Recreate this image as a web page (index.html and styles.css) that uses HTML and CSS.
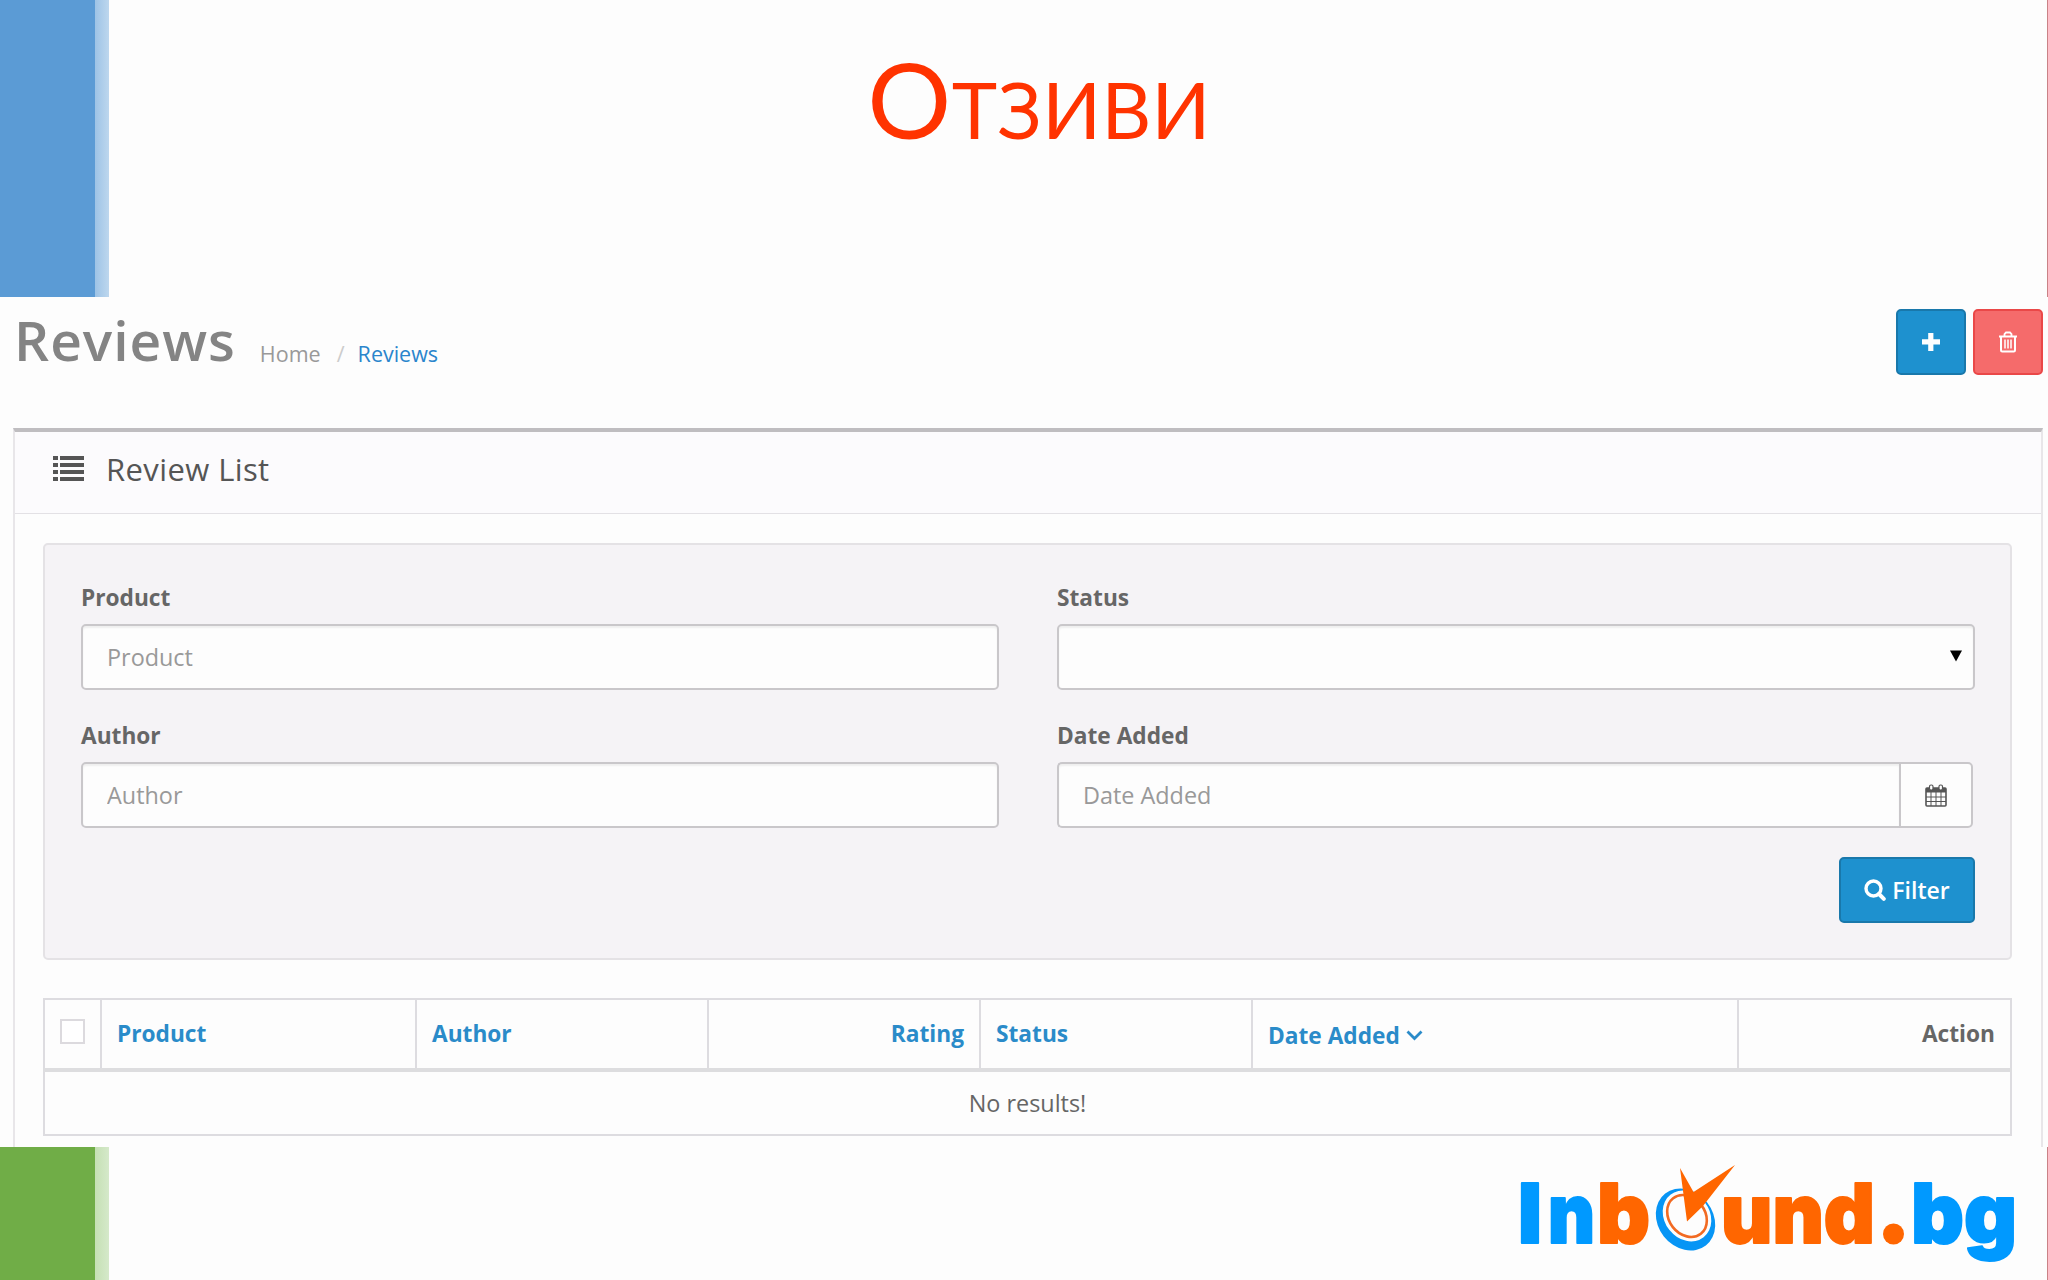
FILE: index.html
```
<!DOCTYPE html>
<html lang="bg">
<head>
    <meta charset="UTF-8">
    <title>Отзиви</title>
    <link rel="stylesheet" href="styles.css">
</head>
<body>

    <header class="slide-top">
        <div class="stripe stripe-blue"></div>
        <h1 class="slide-title"><span class="cap">О</span>тзиви</h1>
    </header>

    <main class="content">
        <div class="page-header">
            <h2>Reviews</h2>
            <ul class="breadcrumb">
                <li>Home</li>
                <li class="sep">/</li>
                <li class="active">Reviews</li>
            </ul>
            <div class="actions">
                <button type="button" class="btn btn-icon">
                    <svg width="20" height="20" viewBox="0 0 20 20"><path d="M7.2 1h5.200v6.300H19v5.200h-6.600V19H7.200v-6.500H1V7.300h6.200z" fill="#fff"/></svg>
                </button>
                <button type="button" class="btn btn-icon btn-danger">
                    <svg width="20" height="22" viewBox="0 0 20 22" fill="none" stroke="#fff">
                        <path d="M1 5.500h18M6.500 5V3l1.500-1.500h4L13.500 3v2" stroke-width="1.800"/>
                        <path d="M3 5.500V19.300q0 1.200 1.200 1.200h11.600q1.200 0 1.200-1.200V5.500" stroke-width="2"/>
                        <path d="M7 8.500v9M10 8.500v9M13 8.500v9" stroke-width="1.500"/>
                    </svg>
                </button>
            </div>
        </div>

        <section class="panel">
            <div class="panel-heading">
                <svg width="31" height="25" viewBox="0 0 31 25" fill="#555">
                    <path d="M0 0h5v4H0zM7 0h24v4H7zM0 7h5v4H0zM7 7h24v4H7zM0 14h5v4H0zM7 14h24v4H7zM0 21h5v4H0zM7 21h24v4H7z"/>
                </svg>
                <h3>Review List</h3>
            </div>

            <div class="panel-body">
                <form class="well">
                    <div class="field">
                        <label for="product">Product</label>
                        <input type="text" id="product" placeholder="Product">
                    </div>
                    <div class="field">
                        <label for="status">Status</label>
                        <div class="select">
                            <select id="status"><option></option></select>
                            <svg class="arrow" width="12" height="12" viewBox="0 0 12 12"><path d="M0 0.500h12L6 11.500z"/></svg>
                        </div>
                    </div>
                    <div class="field">
                        <label for="author">Author</label>
                        <input type="text" id="author" placeholder="Author">
                    </div>
                    <div class="field">
                        <label for="date">Date Added</label>
                        <div class="input-group">
                            <input type="text" id="date" placeholder="Date Added">
                            <button type="button" class="addon">
                                <svg width="22" height="23" viewBox="0 0 22 23" fill="none" stroke="#555">
                                    <path d="M1 4h20v4.500H1z" fill="#555" stroke="none"/>
                                    <rect x="1" y="4" width="20" height="18" rx="1" stroke-width="1.600"/>
                                    <path d="M1 13h20M1 17.500h20M6 8v14M11 8v14M16 8v14" stroke-width="1"/>
                                    <rect x="4.500" y="1" width="3.500" height="5" rx="1.500" fill="#fff" stroke-width="1.200"/>
                                    <rect x="14" y="1" width="3.500" height="5" rx="1.500" fill="#fff" stroke-width="1.200"/>
                                </svg>
                            </button>
                        </div>
                    </div>
                    <button type="button" class="btn btn-filter">
                        <svg width="22" height="22" viewBox="0 0 22 22" fill="none" stroke="#fff">
                            <circle cx="9.500" cy="9.500" r="7.500" stroke-width="3.400"/>
                            <path d="M15 15l4.800 4.800" stroke-width="4" stroke-linecap="round"/>
                        </svg>
                        Filter
                    </button>
                </form>

                <table>
                    <colgroup>
                        <col class="c-check"><col class="c-product"><col class="c-author"><col class="c-rating"><col class="c-status"><col class="c-date"><col>
                    </colgroup>
                    <thead>
                        <tr>
                            <th class="check"><input type="checkbox"></th>
                            <th>Product</th>
                            <th>Author</th>
                            <th class="right">Rating</th>
                            <th>Status</th>
                            <th class="sorted">Date Added
                                <svg width="17" height="11" viewBox="0 0 17 11"><path d="M1.500 1.500l7 7 7-7" fill="none" stroke="#2a8bc9" stroke-width="2.800"/></svg>
                            </th>
                            <th class="right plain">Action</th>
                        </tr>
                    </thead>
                    <tbody>
                        <tr>
                            <td colspan="7">No results!</td>
                        </tr>
                    </tbody>
                </table>
            </div>
        </section>
    </main>

    <footer class="slide-bottom">
        <div class="stripe stripe-green"></div>
        <svg class="logo" width="508" height="110" viewBox="1512 1160 508 110">
            <g class="logo-blue">
                <text x="1518" y="1243" textLength="24" lengthAdjust="spacingAndGlyphs">I</text>
                <text x="1548" y="1243" textLength="47" lengthAdjust="spacingAndGlyphs">n</text>
                <text x="1911" y="1243" textLength="106" lengthAdjust="spacingAndGlyphs">bg</text>
            </g>
            <g class="logo-orange">
                <text x="1597" y="1243" textLength="53" lengthAdjust="spacingAndGlyphs">b</text>
                <text x="1721" y="1243" textLength="154" lengthAdjust="spacingAndGlyphs">und</text>
            </g>
            <circle cx="1893.500" cy="1234" r="10.500" fill="#ff6600"/>
            <!-- target with the arrow in place of the "o" -->
            <g transform="rotate(-38 1685.500 1219.500)">
                <ellipse cx="1685.500" cy="1219.500" rx="27.500" ry="33" fill="#0795f5"/>
            </g>
            <g transform="rotate(-38 1687 1216)">
                <ellipse cx="1687" cy="1216" rx="22.500" ry="27" fill="#fdfdfd"/>
                <ellipse cx="1687" cy="1216" rx="18" ry="22.500" fill="none" stroke="#f26a22" stroke-width="2.600"/>
            </g>
            <path d="M1680 1168L1693.500 1192 1735 1165 1703 1206 1687 1221.500z" fill="#ff6600"/>
        </svg>
    </footer>

</body>
</html>
```
FILE: styles.css
```
* {
    box-sizing: border-box;
}

body {
    margin: 0;
    height: 1280px;
    overflow: hidden;
    background: #fdfdfd;
    font-family: "Open Sans", "Noto Sans", sans-serif;
    font-size: 23px;
    color: #666;
}

h1, h2, h3 {
    margin: 0;
}

/* slide frame */
.slide-top, .slide-bottom {
    display: flex;
    border-right: 1px solid #c98286;
}

.slide-top {
    height: 297px;
}

.slide-bottom {
    height: 133px;
    justify-content: space-between;
}

.stripe {
    width: 109px;
    flex: none;
}

.stripe-blue {
    background: linear-gradient(to right, #5b9bd5 95px, #9dc3e6 95px, #bdd7ee);
}

.stripe-green {
    background: linear-gradient(to right, #70ad47 95px, #c5e0b4 95px, #d5e9ca);
}

.slide-title {
    flex: 1;
    padding: 33px 78px 0 0;
    text-align: center;
    font-family: Lato, "Open Sans", sans-serif;
    font-weight: 400;
    font-size: 77px;
    line-height: 130px;
    letter-spacing: 0.4px;
    text-transform: uppercase;
    color: #ff3300;
}

.slide-title .cap {
    font-size: 105px;
}

/* page header */
.content {
    height: 850px;
    padding: 12px 5px 0 13px;
}

.page-header {
    display: flex;
    height: 119px;
}

.page-header h2 {
    margin: -2px 0 0 1px;
    font-size: 55px;
    font-weight: 600;
    line-height: 66px;
    letter-spacing: 1px;
    color: #848484;
}

.breadcrumb {
    display: flex;
    margin: 29px 0 0 24px;
    padding: 0;
    list-style: none;
    font-size: 21.5px;
    font-weight: 500;
    line-height: 32px;
    color: #999;
}

.breadcrumb .sep {
    width: 37px;
    padding-left: 3px;
    text-align: center;
    color: #ccc;
}

.breadcrumb .active {
    color: #2a85cc;
}

.actions {
    display: flex;
    gap: 7px;
    margin-left: auto;
}

.btn {
    display: flex;
    align-items: center;
    justify-content: center;
    height: 66px;
    border: 2px solid #1978ab;
    border-radius: 5px;
    background: #1e91cf;
    color: #fff;
    font: 600 23px "Open Sans", sans-serif;
}

.btn-icon {
    width: 70px;
}

.btn-danger {
    background: #f56b6b;
    border-color: #ea4848;
}

/* panel */
.panel {
    height: 719px;
    border: 2px solid #e8e6e9;
    border-top: 4px solid #bfbdc0;
    border-bottom: 0;
}

.panel-heading {
    display: flex;
    align-items: center;
    gap: 22px;
    height: 82px;
    padding: 0 0 8px 38px;
    border-bottom: 1px solid #e3e1e5;
    background: #fcfbfd;
}

.panel-heading h3 {
    font-size: 31px;
    font-weight: 500;
    letter-spacing: 0.4px;
    color: #555;
}

.panel-body {
    padding: 29px 29px 0 28px;
}

.well {
    display: grid;
    grid-template-columns: 918px 918px;
    column-gap: 58px;
    height: 417px;
    grid-template-rows: 138px 138px 66px;
    padding: 33px 0 0 36px;
    border: 2px solid #e4e2e5;
    border-radius: 5px;
    background: #f5f3f6;
}

.field label {
    display: block;
    height: 46px;
    line-height: 39px;
    font-size: 22.7px;
    font-weight: 700;
}

.field input, .field select {
    display: block;
    width: 100%;
    height: 66px;
    padding: 0 24px;
    border: 2px solid #c9c7ca;
    border-radius: 5px;
    background: #fdfdfd;
    box-shadow: inset 0 2px 2px rgba(0,0,0,0.06);
    font: 500 23.4px "Open Sans", sans-serif;
    appearance: none;
}

.field input::placeholder {
    color: #999;
}

.select {
    position: relative;
}

.arrow {
    position: absolute;
    right: 13px;
    top: 26px;
}

.input-group {
    display: flex;
    width: 916px;
}

.field .input-group input {
    flex: 1;
    border-right: 0;
    border-radius: 5px 0 0 5px;
}

.addon {
    width: 74px;
    height: 66px;
    padding: 3px 0 0;
    border: 2px solid #c9c7ca;
    border-radius: 0 5px 5px 0;
    background: #fdfdfd;
}

.btn-filter {
    grid-column: 2;
    justify-self: end;
    gap: 6px;
    width: 136px;
    margin-top: 3px;
    padding: 0;
}

/* list */
table {
    width: 1969px;
    margin-top: 38px;
    table-layout: fixed;
    border-collapse: collapse;
}

.c-check { width: 57px; }
.c-product { width: 315px; }
.c-author { width: 292px; }
.c-rating { width: 272px; }
.c-status { width: 272px; }
.c-date { width: 486px; }

th, td {
    border: 2px solid #dddce0;
}

th {
    height: 71px;
    padding: 0 15px 2px;
    border-bottom: 4px solid #dddddf;
    text-align: left;
    font-size: 22.7px;
    font-weight: 700;
    color: #2a8bc9;
}

td {
    height: 65px;
    padding: 0;
    text-align: center;
    font-size: 23.4px;
    font-weight: 500;
}

.right {
    text-align: right;
}

.plain {
    color: #666;
}

.check {
    padding: 0;
}

.check input {
    display: block;
    width: 25px;
    height: 25px;
    margin: 0 0 6px 15px;
    border: 2px solid #dcdade;
    background: #fff;
    appearance: none;
}

.sorted {
    padding-top: 2px;
    padding-bottom: 0;
}

.sorted svg {
    margin-bottom: 3px;
}

/* logo */
.logo {
    margin: 13px 27px 0 0;
    font-family: Inter, "Open Sans", sans-serif;
    font-size: 83px;
    font-weight: 900;
}

.logo text {
    stroke-width: 2;
    stroke-linejoin: round;
}

.logo-blue {
    fill: #0099ff;
    stroke: #0099ff;
}

.logo-orange {
    fill: #ff6600;
    stroke: #ff6600;
}
```
